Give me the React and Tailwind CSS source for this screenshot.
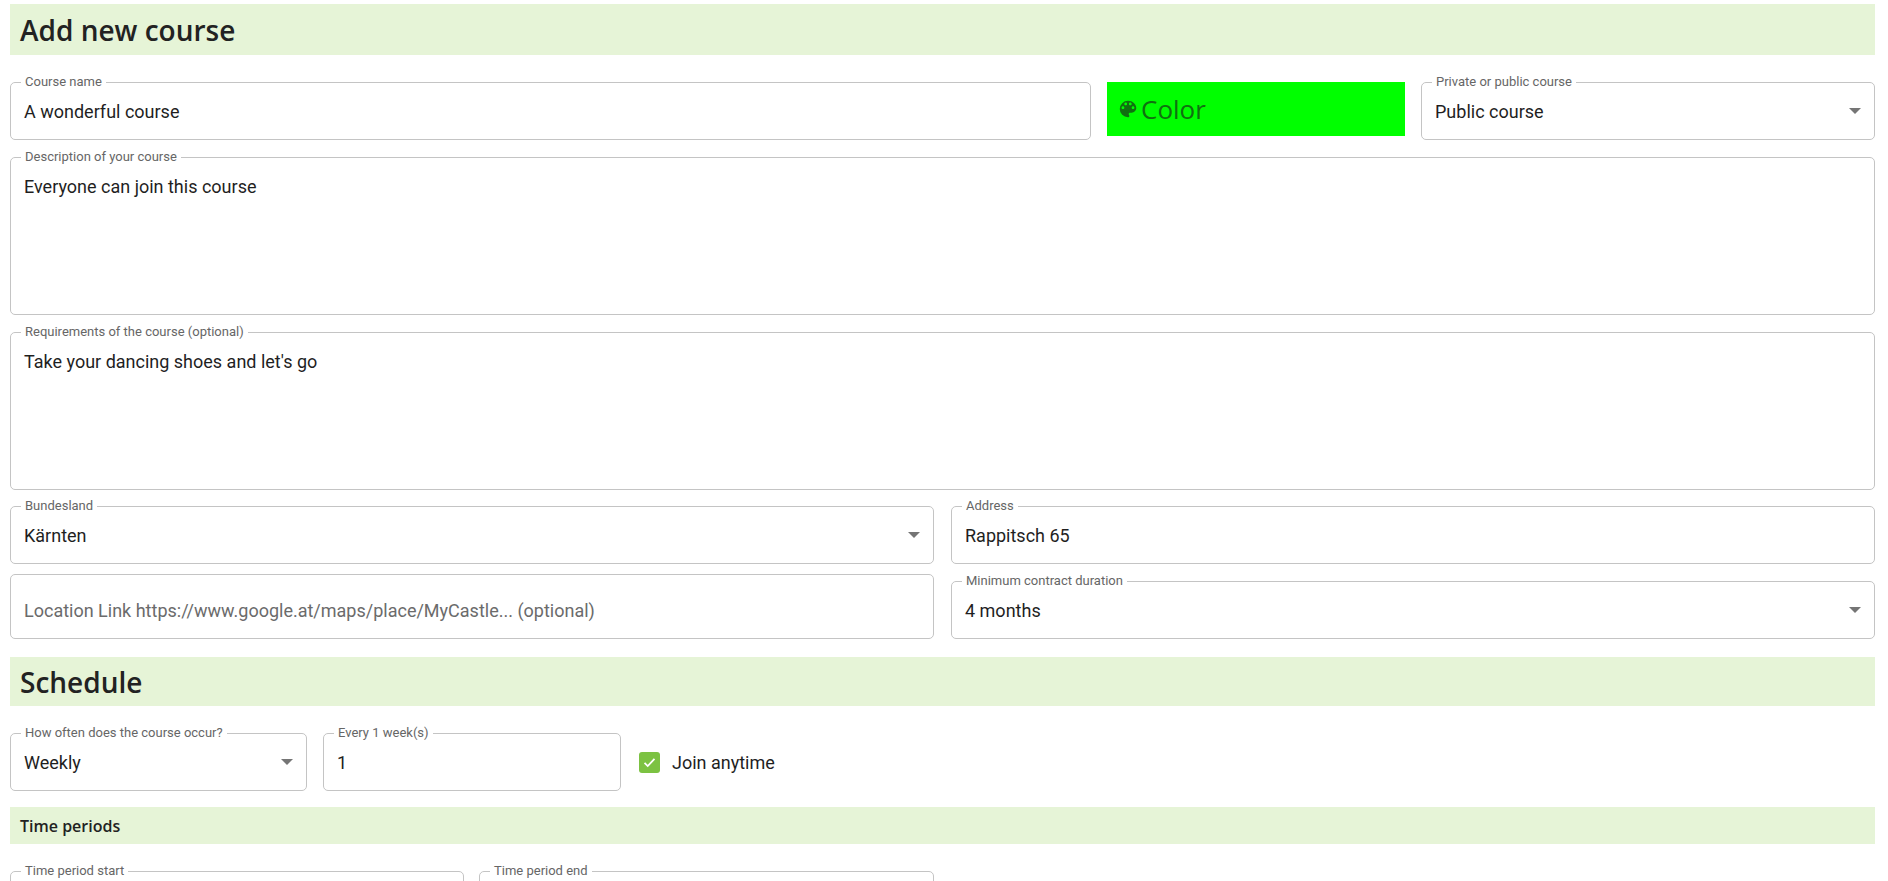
import React from "react";

const Field = ({ label, value, placeholder, select, className = "", h = "h-[58px]", multiline }) => (
  <div className={`relative ${h} ${className}`}>
    <fieldset className="absolute left-0 right-0 bottom-0 top-[-7px] border border-[#c4c4c4] rounded-[5px] px-[10px] m-0 pointer-events-none">
      {label && (
        <legend className="px-[4px] text-[13px] leading-[14px] text-[#666] font-[Roboto]">{label}</legend>
      )}
    </fieldset>
    <div className={`absolute left-[14px] right-[40px] ${multiline ? "top-[16px]" : "top-0 bottom-0 flex items-center"} text-[18px] font-[Roboto] ${placeholder ? "text-[#6b6b6b]" : "text-[#1f1f1f]"}`}>
      {value || placeholder}
    </div>
    {select && (
      <div className="absolute right-[14px] top-0 bottom-0 flex items-center">
        <div className="w-0 h-0 border-l-[6px] border-r-[6px] border-t-[6px] border-l-transparent border-r-transparent border-t-[#757575]" />
      </div>
    )}
  </div>
);

const Bar = ({ children, h, size }) => (
  <div className={`bg-[#e6f4d7] ${h} flex items-center px-[10px] font-[Open_Sans] font-semibold text-[#222] ${size}`}>{children}</div>
);

export default function App() {
  return (
    <div className="bg-white w-[1888px] h-[881px] overflow-hidden pl-[10px] pr-[13px] pt-[4px]">
      <Bar h="h-[51px]" size="text-[28px]">Add new course</Bar>
      <div className="flex gap-[16px] mt-[27px] items-start">
        <Field label="Course name" value="A wonderful course" className="w-[1081px]" />
        <div className="w-[298px] h-[54px] bg-[#00ff00] flex items-center px-[10px] gap-[2px] text-[#107010] text-[26px] font-[Open_Sans]">
          <svg viewBox="0 0 24 24" width="22" height="22" fill="#107010"><path d="M12 3a9 9 0 0 0 0 18c.83 0 1.5-.67 1.5-1.5 0-.39-.15-.74-.39-1.01-.23-.26-.38-.61-.38-.99 0-.83.67-1.5 1.5-1.5H16c2.76 0 5-2.240 5-5 0-4.420-4.030-8-9-8zm-5.5 9c-.83 0-1.5-.67-1.5-1.5S5.67 9 6.5 9 8 9.67 8 10.5 7.33 12 6.5 12zm3-4C8.67 8 8 7.33 8 6.5S8.67 5 9.5 5s1.5.67 1.5 1.5S10.33 8 9.5 8zm5 0c-.83 0-1.5-.67-1.5-1.5S13.67 5 14.5 5s1.5.67 1.5 1.5S15.33 8 14.5 8zm3 4c-.83 0-1.5-.67-1.5-1.5S16.67 9 17.5 9s1.5.67 1.5 1.5-.67 1.5-1.5 1.5z"/></svg>
          Color
        </div>
        <Field label="Private or public course" value="Public course" select className="flex-1" />
      </div>
      <Field label="Description of your course" value="Everyone can join this course" multiline h="h-[158px]" className="mt-[17px]" />
      <Field label="Requirements of the course (optional)" value="Take your dancing shoes and let's go" multiline h="h-[158px]" className="mt-[17px]" />
      <div className="grid grid-cols-2 gap-x-[17px] gap-y-[17px] mt-[16px]">
        <Field label="Bundesland" value="Kärnten" select />
        <Field label="Address" value="Rappitsch 65" />
        <Field placeholder="Location Link https://www.google.at/maps/place/MyCastle... (optional)" />
        <Field label="Minimum contract duration" value="4 months" select />
      </div>
      <div className="mt-[18px]"><Bar h="h-[49px]" size="text-[28px]">Schedule</Bar></div>
      <div className="flex gap-[16px] mt-[27px] items-center">
        <Field label="How often does the course occur?" value="Weekly" select className="w-[297px]" />
        <Field label="Every 1 week(s)" value="1" className="w-[298px]" />
        <div className="flex items-center gap-[12px] ml-[2px]">
          <div className="w-[21px] h-[21px] rounded-[3px] bg-[#7cc242] flex items-center justify-center">
            <svg viewBox="0 0 24 24" width="17" height="17" fill="none" stroke="white" strokeWidth="2.5"><path d="M5 12.5l4.5 4.5L19 7" /></svg>
          </div>
          <span className="text-[18px] text-[#1f1f1f] font-[Roboto]">Join anytime</span>
        </div>
      </div>
      <div className="mt-[16px]"><Bar h="h-[37px]" size="text-[16px]">Time periods</Bar></div>
      <div className="flex gap-[15px] mt-[27px]">
        <Field label="Time period start" className="w-[454px]" />
        <Field label="Time period end" className="w-[455px]" />
      </div>
    </div>
  );
}
